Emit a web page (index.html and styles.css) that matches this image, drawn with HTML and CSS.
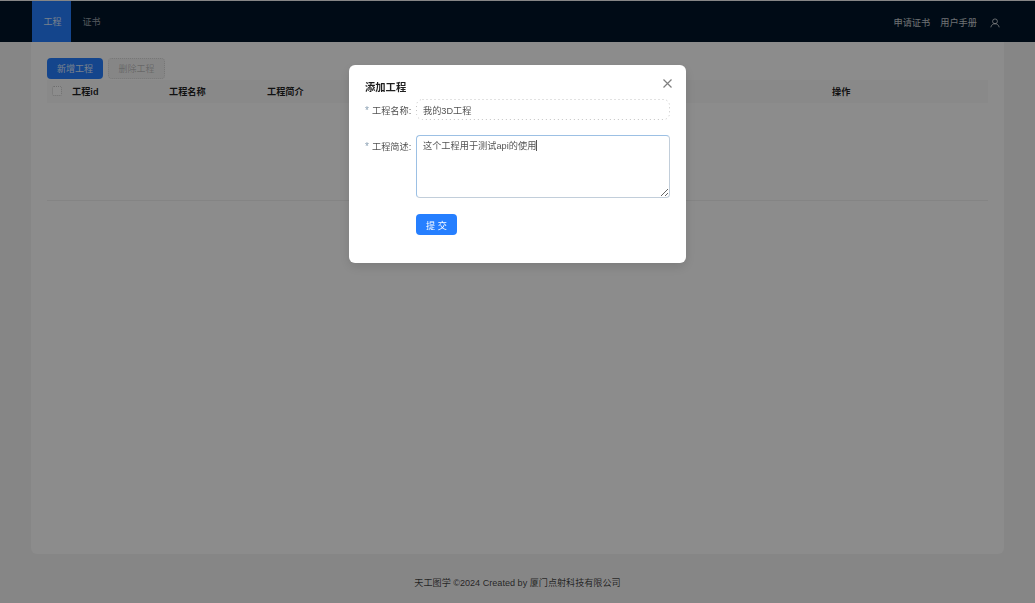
FILE: index.html
```html
<!DOCTYPE html>
<html>
<head>
    <title>工程 - 天工图学</title>
    <link rel="stylesheet" href="styles.css">
</head>
<body>
    <div class="layout">
        <header class="top-bar">
            <nav class="top-nav">
                <a class="nav-item active">工程</a>
                <a class="nav-item">证书</a>
            </nav>
            <div class="top-right">
                <a class="top-link">申请证书</a>
                <a class="top-link">用户手册</a>
                <svg class="user-icon" viewBox="0 0 12 12" width="10" height="10">
                    <circle cx="6" cy="4" r="2.9"></circle>
                    <path d="M1 11.2c.4-2.6 2.4-4.3 5-4.300s4.600 1.700 5 4.300"></path>
                </svg>
            </div>
        </header>
        <main class="content">
            <div class="toolbar">
                <button class="btn btn-primary">新增工程</button>
                <button class="btn btn-disabled">删除工程</button>
            </div>
            <div class="table-head">
                <div class="col col-check"><span class="checkbox"></span></div>
                <div class="col col-id">工程id</div>
                <div class="col col-name">工程名称</div>
                <div class="col col-desc">工程简介</div>
                <div class="col col-action">操作</div>
            </div>
            <div class="table-empty"></div>
        </main>
        <footer class="footer">天工图学 ©2024 Created by 厦门点射科技有限公司</footer>
    </div>

    <div class="mask"></div>

    <div class="modal">
        <svg class="modal-close" viewBox="0 0 9 9" width="9" height="9">
            <path d="M.5.5l8 8M8.500.5l-8 8"></path>
        </svg>
        <div class="modal-title">添加工程</div>
        <form class="modal-form">
            <div class="form-row">
                <label class="form-label"><span class="req">*</span>工程名称:</label>
                <div class="field">
                    <input class="form-input" type="text" value="我的3D工程">
                    <svg class="field-dots" width="254" height="21">
                        <rect x="0.5" y="0.5" width="253" height="20" rx="6"></rect>
                    </svg>
                </div>
            </div>
            <div class="form-row form-row-area">
                <label class="form-label"><span class="req">*</span>工程简述:</label>
                <div class="field">
                    <textarea class="form-area">这个工程用于测试api的使用</textarea>
                    <span class="caret"></span>
                </div>
            </div>
            <div class="form-submit">
                <button type="button" class="btn-submit">提 交</button>
            </div>
        </form>
    </div>
</body>
</html>
```

FILE: styles.css
```css
* {
    margin: 0;
    padding: 0;
    box-sizing: border-box;
    font-family: "Liberation Sans", "Noto Sans CJK SC", sans-serif;
}

body {
    background: #f5f5f5;
    height: 603px;
    overflow: hidden;
    font-size: 9.2px;
}

.layout {
    display: flex;
    flex-direction: column;
    height: 603px;
    padding-top: 1px;
}

.top-bar {
    display: flex;
    justify-content: space-between;
    align-items: stretch;
    height: 41px;
    background: #001529;
    padding: 0 35px 0 32px;
}

.top-nav {
    display: flex;
}

.nav-item {
    display: flex;
    align-items: center;
    justify-content: center;
    width: 39px;
    padding-left: 2px;
    font-size: 9px;
    color: rgba(255, 255, 255, 0.6);
}

.nav-item.active {
    background: #267fff;
    color: rgba(255, 255, 255, 0.85);
}

.top-right {
    display: flex;
    align-items: center;
    gap: 10px;
}

.top-link {
    color: rgba(255, 255, 255, 0.8);
}

.user-icon {
    margin-left: 3px;
    margin-top: 2px;
    fill: none;
    stroke: rgba(255, 255, 255, 0.85);
    stroke-width: 1;
}

.content {
    flex: 1;
    margin: 0 31px;
    padding: 16px;
    background: #fff;
    border-radius: 0 0 6px 6px;
}

.toolbar {
    display: flex;
    gap: 5px;
    height: 22px;
}

.btn {
    width: 57px;
    height: 21px;
    border-radius: 4px;
    font-size: 9px;
    border: 1px solid transparent;
}

.btn-primary {
    width: 56px;
    background: #267fff;
    color: rgba(255, 255, 255, 0.85);
}

.btn-disabled {
    background: #f5f5f5;
    border: 1px dotted #d9d9d9;
    color: rgba(0, 0, 0, 0.25);
}

.table-head {
    display: flex;
    align-items: center;
    height: 23px;
    padding-bottom: 2px;
    background: #fafafa;
    font-weight: bold;
    color: rgba(0, 0, 0, 0.88);
}

.col-check {
    display: flex;
    align-items: center;
    padding-left: 5px;
    width: 25px;
}

.checkbox {
    width: 10px;
    height: 10px;
    border: 1px dotted #c8c8c8;
    border-radius: 2px;
    background: #fff;
}

.col-id {
    width: 97px;
}

.col-name {
    width: 98px;
}

.col-desc {
    width: 565px;
}

.table-empty {
    height: 98px;
    border-bottom: 1px solid #f0f0f0;
}

.footer {
    height: 49px;
    display: flex;
    align-items: center;
    justify-content: center;
    padding-top: 7px;
    font-size: 9.1px;
    color: rgba(0, 0, 0, 0.75);
}

.mask {
    position: fixed;
    inset: 0;
    background: rgba(0, 0, 0, 0.45);
}

.modal {
    position: fixed;
    left: 349px;
    top: 65px;
    width: 337px;
    height: 198px;
    padding: 16px;
    background: #fff;
    border-radius: 6px;
    box-shadow: 0 4px 12px rgba(0, 0, 0, 0.12);
}

.modal-close {
    position: absolute;
    right: 14px;
    top: 14px;
    fill: none;
    stroke: rgba(0, 0, 0, 0.5);
    stroke-width: 1.2;
}

.modal-title {
    font-size: 10.3px;
    font-weight: bold;
    line-height: 12px;
    height: 12px;
    padding-top: 0.5px;
    color: rgba(0, 0, 0, 0.88);
}

.modal-form {
    margin-top: 6px;
}

.form-row {
    display: flex;
    height: 21px;
    align-items: center;
}

.form-row-area {
    margin-top: 15px;
    height: 63px;
    align-items: flex-start;
}

.form-label {
    width: 51px;
    color: rgba(0, 0, 0, 0.7);
    white-space: nowrap;
}

.form-row-area .form-label {
    padding-top: 4px;
}

.req {
    display: inline-block;
    width: 7px;
    color: #8a9fb2;
    font-size: 10px;
}

.field {
    position: relative;
    display: flex;
}

.form-input,
.form-area {
    width: 254px;
    font-size: 9.2px;
    padding: 4px 7px;
    color: rgba(0, 0, 0, 0.7);
    background: #fff;
    border-radius: 4px;
    outline: none;
}

.form-input {
    height: 21px;
    border: none;
}

.field-dots {
    position: absolute;
    left: 0;
    top: 0;
    fill: none;
    stroke: #c4c4c4;
    stroke-dasharray: 1 3;
    pointer-events: none;
}

.form-area {
    height: 63px;
    padding-left: 6px;
    border: 1px solid;
    border-color: #9cc0e4 #c2ceda #c2ceda #9cc0e4;
    line-height: 12px;
    resize: vertical;
}

.caret {
    position: absolute;
    left: 120px;
    top: 5px;
    width: 1px;
    height: 11px;
    background: #555;
}

.form-submit {
    margin: 16px 0 0 51px;
}

.btn-submit {
    width: 41px;
    height: 21px;
    background: #267fff;
    color: #fff;
    border: none;
    border-radius: 4px;
    font-size: 9.2px;
}
```
